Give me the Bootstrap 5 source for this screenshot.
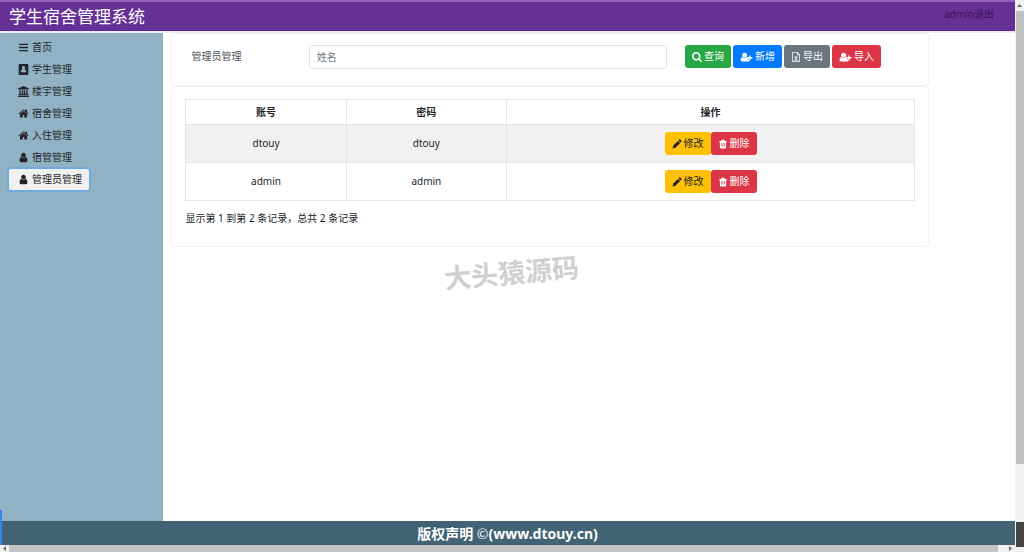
<!DOCTYPE html>
<html lang="zh-CN">
<head>
<meta charset="utf-8">
<meta name="viewport" content="width=device-width, initial-scale=1">
<title>学生宿舍管理系统</title>
<link href="https://cdn.jsdelivr.net/npm/bootstrap@5.3.0/dist/css/bootstrap.min.css" rel="stylesheet">
<style>
body{font-family:"Noto Sans","Noto Sans CJK SC",sans-serif;font-size:10px;line-height:15px;color:#212529;overflow:hidden}
.topbar{background:#663096;border-top:2px solid #8f62b5;border-bottom:1px solid #592a86;height:31px;padding:0 21px 0 9px}
.brand{font-size:17px;line-height:30px;color:#fff}
.logout{color:#37134f;text-decoration:none;padding-top:5px}
.workspace{border-top:2px solid #eee8f5}
.side{width:16.1%;background:#91b2c4;padding:3px 8px}
.side .btn{padding:3px 7px 3px 9px;font-size:10px;line-height:15px;border:1px solid transparent;border-radius:3px;color:#212529;margin-bottom:-1px}
.side .btn.active{background:#f0f0f0;border-color:#6fa8dc;box-shadow:0 0 0 1px #73acdb;color:#212529}
.side .ico{margin-right:3px}
.ico{width:11px;height:11px;fill:currentColor;flex:none}
.content{padding-left:8px;padding-right:86px}
.panel{border:1px solid #f0f1f4;border-radius:4px}
.search-panel{height:53px;padding:11px 47px 0 19px}
.search-panel label{width:17%;color:#495057;flex:none}
.search-panel .form-control{height:24px;font-size:10px;line-height:15px;padding:3px 7px;border-color:#dfe2e6;border-radius:3px}
.search-panel .form-control::placeholder{color:#6c757d}
.tools{gap:2px;margin-left:18px}
.act{display:inline-flex;align-items:center;height:23px;padding:0 7px;gap:2px;font-size:10px;line-height:15px;border:0;border-radius:3px;color:#fff;white-space:nowrap}
.act:hover{color:#fff}
.act .ico{width:10px;height:10px}
.act .wide{width:13px}
.green{background:#28a745}.blue{background:#007bff}.grey{background:#6c757d}.red{background:#dc3545}
.amber,.amber:hover{background:#ffc107;color:#212529}
.list-panel{padding:12px 13px 20px}
.users{border:1px solid #d0d2d5;margin-bottom:10px;table-layout:fixed;text-align:center;color:#212529}
.users th,.users td{vertical-align:middle;border:1px solid #e3e5e8;padding:7px}
.users th{padding:5px 7px 4px}
.users .key{width:22%}
.users tbody tr:first-child td{background:#f1f1f1;box-shadow:none}
.users td .d-flex{height:23px}
.copyright{background:#426374;color:#fff;height:24px;font-size:14px;line-height:24px;font-weight:700}
.copyright .sign{font-family:"Noto Sans CJK SC",sans-serif;font-weight:400}
.watermark{left:444px;top:253px;font-size:27px;line-height:40px;font-weight:700;color:#d0d0d0;transform:rotate(-5deg)}
.vbar{width:9px;background:#f1f1f1}
.vbar .thumb{height:82%;margin-left:1px;background:#c1c1c1}
.hbar{height:7px;background:#f1f1f1}
.hbar .thumb{background:#c1c3c5}
.arrow{width:9px;height:11px;fill:#666;display:block;flex:none}
.hbar .arrow{height:7px}
.edge{left:0;bottom:7px;width:2px;height:35px;background:#3b82f6}
.dock{right:0;bottom:5px;width:8px;height:25px;background:#454545}
</style>
</head>
<body>
<svg class="d-none" aria-hidden="true">
<symbol id="bars" viewBox="0 0 16 16"><path d="M1.500 2.500h13v2h-13zM1.500 7h13v2h-13zM1.500 11.500h13v2h-13z"/></symbol>
<symbol id="book" viewBox="0 0 16 16"><path fill-rule="evenodd" d="M2.500 0h11A1.500 1.500 0 0 1 15 1.500v13a1.500 1.500 0 0 1-1.500 1.500h-11A1.500 1.500 0 0 1 1 14.500v-13A1.500 1.500 0 0 1 2.500 0zM8 3a2.300 2.300 0 0 0-2.300 2.500c0 1 .4 1.800 1 2.300C5 8.300 4 9.800 4 12h8c0-2.200-1-3.700-2.700-4.200.6-.5 1-1.300 1-2.300A2.300 2.300 0 0 0 8 3z"/></symbol>
<symbol id="bank" viewBox="0 0 16 16"><path d="M8 0l8 3.500V5H0V3.500zM2 6h2v6h1.500V6h2v6h1V6h2v6H12V6h2v6h1v1.300H1V12h1zM0 14h16v2H0z"/></symbol>
<symbol id="home" viewBox="0 0 1792 1792"><path d="M1472 992v480q0 26-19 45t-45 19h-384v-384h-256v384h-384q-26 0-45-19t-19-45v-480q0-1 .5-3t.5-3l575-474 575 474q1 2 1 6zm223-69l-62 74q-8 9-21 11h-3q-13 0-21-7l-692-577-692 577q-12 8-24 7-13-2-21-11l-62-74q-8-10-7-23.500t11-21.500l719-599q32-26 76-26t76 26l244 204v-195q0-14 9-23t23-9h192q14 0 23 9t9 23v408l219 182q10 8 11 21.500t-7 23.500z"/></symbol>
<symbol id="user" viewBox="0 0 1792 1792"><path d="M1536 1399q0 109-62.500 187t-150.500 78h-854q-88 0-150.500-78t-62.500-187q0-85 8.500-160.500t31.500-152 58.500-131 94-89 134.500-34.500q131 128 313 128t313-128q76 0 134.500 34.500t94 89 58.500 131 31.500 152 8.500 160.500zm-256-887q0 159-112.500 271.500t-271.500 112.500-271.500-112.500-112.500-271.500 112.500-271.500 271.500-112.500 271.500 112.500 112.500 271.500z"/></symbol>
<symbol id="find" viewBox="64 128 1664 1664"><path d="M1216 832q0-185-131.500-316.500t-316.500-131.500-316.500 131.500-131.500 316.500 131.500 316.500 316.500 131.500 316.500-131.500 131.500-316.500zm512 832q0 52-38 90t-90 38q-54 0-90-38l-343-342q-179 124-399 124-143 0-273.500-55.500t-225-150-150-225-55.500-273.500 55.500-273.500 150-225 225-150 273.500-55.500 273.500 55.500 225 150 150 225 55.500 273.500q0 220-124 399l343 343q37 37 37 90z"/></symbol>
<symbol id="plus" viewBox="0 0 19 16"><circle cx="6.500" cy="5" r="4"/><path d="M3 8.500c2 1.800 5 1.800 7 0 .8 0 1.500.3 2 .8V12h2.500v2c-.4.600-1 1-1.800 1H2.500C1 15 0 14 0 12.500c0-2.300.7-4 3-4zM14 5.500h2V8h3v2.200h-3V13h-2v-2.800h-3V8h3z"/></symbol>
<symbol id="file" viewBox="0 0 16 16"><path fill-rule="evenodd" d="M2 0h8.500L14 3.500V16H2zm1.200 1.200v13.600h9.600V5H9.500V1.200zm7.300.3V4H13zM5 7h2.500v1l.6 1 .6-1V7H11v1h-.7l-1.500 2.300 1.600 2.400h.8v1H8.500v-1l-.6-1-.6 1v1H5v-1h.7l1.500-2.400L5.700 8H5z"/></symbol>
<symbol id="pencil" viewBox="0 0 16 16"><path d="M1 15l1-4.500L9.500 3 13 6.500 5.500 14zM10.300 2.200L11.500 1c.7-.7 1.300-.7 2 0L15 2.500c.7.700.7 1.300 0 2l-1.200 1.200z"/></symbol>
<symbol id="trash" viewBox="0 0 16 16"><path fill-rule="evenodd" d="M6 1h4l1 2h3v2h-1v8.500c0 .8-.6 1.500-1.500 1.500h-7c-.9 0-1.500-.7-1.500-1.500V5H2V3h3zM5.200 6.500V12h1V6.500zm2.300 0V12h1V6.500zm2.300 0V12h1V6.500z"/></symbol>
</svg>

<div class="d-flex vh-100 position-relative">
  <div class="d-flex flex-column flex-grow-1">
    <header class="topbar d-flex justify-content-between">
      <h1 class="brand fw-normal m-0">学生宿舍管理系统</h1>
      <a class="logout" href="#">admin退出</a>
    </header>
    <div class="workspace d-flex flex-grow-1">
      <nav class="side d-flex flex-column align-items-start flex-shrink-0">
        <button class="btn d-flex align-items-center"><svg class="ico"><use href="#bars"/></svg>首页</button>
        <button class="btn d-flex align-items-center"><svg class="ico"><use href="#book"/></svg>学生管理</button>
        <button class="btn d-flex align-items-center"><svg class="ico"><use href="#bank"/></svg>楼宇管理</button>
        <button class="btn d-flex align-items-center"><svg class="ico"><use href="#home"/></svg>宿舍管理</button>
        <button class="btn d-flex align-items-center"><svg class="ico"><use href="#home"/></svg>入住管理</button>
        <button class="btn d-flex align-items-center"><svg class="ico"><use href="#user"/></svg>宿管管理</button>
        <button class="btn d-flex align-items-center active"><svg class="ico"><use href="#user"/></svg>管理员管理</button>
      </nav>
      <main class="content flex-grow-1">
        <form class="panel search-panel d-flex align-items-start">
          <label for="name" class="pt-1">管理员管理</label>
          <input id="name" class="form-control" type="text" placeholder="姓名">
          <div class="tools d-flex">
            <button type="button" class="btn act green"><svg class="ico"><use href="#find"/></svg>查询</button>
            <button type="button" class="btn act blue"><svg class="ico wide"><use href="#plus"/></svg>新增</button>
            <button type="button" class="btn act grey"><svg class="ico"><use href="#file"/></svg>导出</button>
            <button type="button" class="btn act red"><svg class="ico wide"><use href="#plus"/></svg>导入</button>
          </div>
        </form>
        <section class="panel list-panel">
          <table class="table users">
            <thead><tr><th class="key">账号</th><th class="key">密码</th><th>操作</th></tr></thead>
            <tbody>
              <tr><td>dtouy</td><td>dtouy</td><td><div class="d-flex justify-content-center"><button class="btn act amber"><svg class="ico"><use href="#pencil"/></svg>修改</button><button class="btn act red"><svg class="ico"><use href="#trash"/></svg>删除</button></div></td></tr>
              <tr><td>admin</td><td>admin</td><td><div class="d-flex justify-content-center"><button class="btn act amber"><svg class="ico"><use href="#pencil"/></svg>修改</button><button class="btn act red"><svg class="ico"><use href="#trash"/></svg>删除</button></div></td></tr>
            </tbody>
          </table>
          <p class="m-0">显示第 1 到第 2 条记录，总共 2 条记录</p>
        </section>
      </main>
    </div>
    <footer class="copyright text-center">版权声明 <span class="sign">©</span>(www.dtouy.cn)</footer>
    <div class="hbar d-flex">
      <svg class="arrow" viewBox="0 0 9 7"><path d="M6 1v5L3 3.500z"/></svg>
      <div class="thumb flex-grow-1 me-2"></div>
      <svg class="arrow" viewBox="0 0 9 7"><path d="M3 1v5l3-2.500z"/></svg>
    </div>
  </div>
  <div class="vbar flex-shrink-0">
    <svg class="arrow" viewBox="0 0 9 11"><path d="M2 7h5L4.500 4z"/></svg>
    <div class="thumb"></div>
  </div>
  <div class="watermark position-absolute pe-none">大头猿源码</div>
  <div class="edge position-absolute"></div>
  <div class="dock position-absolute"></div>
</div>
<script src="https://cdn.jsdelivr.net/npm/bootstrap@5.3.0/dist/js/bootstrap.bundle.min.js"></script>
</body>
</html>
